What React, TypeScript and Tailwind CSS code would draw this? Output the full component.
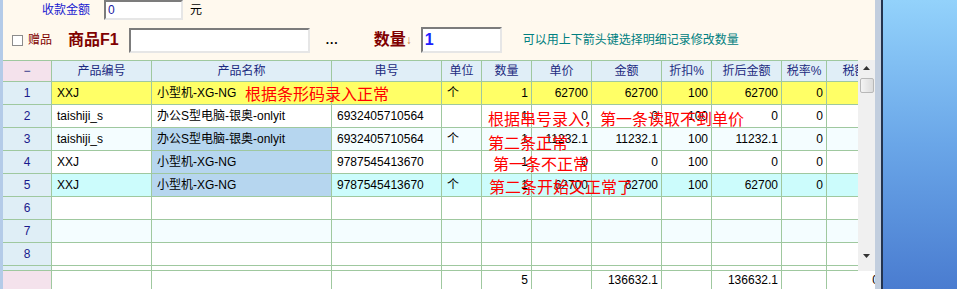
import React from 'react'

type Col = { w: number; title: string; align: 'left' | 'right' | 'center' }

const cols: Col[] = [
  { w: 49, title: '−', align: 'center' },
  { w: 100, title: '产品编号', align: 'left' },
  { w: 180, title: '产品名称', align: 'left' },
  { w: 110, title: '串号', align: 'left' },
  { w: 40, title: '单位', align: 'left' },
  { w: 50, title: '数量', align: 'right' },
  { w: 60, title: '单价', align: 'right' },
  { w: 70, title: '金额', align: 'right' },
  { w: 50, title: '折扣%', align: 'right' },
  { w: 70, title: '折后金额', align: 'right' },
  { w: 45, title: '税率%', align: 'right' },
  { w: 56, title: '税额', align: 'right' },
]

type Row = { bg: string; nameBg?: string; cells: string[] }

const rows: Row[] = [
  { bg: '#ffff66', cells: ['1', 'XXJ', '小型机-XG-NG', '', '个', '1', '62700', '62700', '100', '62700', '0', ''] },
  { bg: '#ffffff', cells: ['2', 'taishiji_s', '办公S型电脑-银奥-onlyit', '6932405710564', '', '1', '0', '0', '100', '0', '0', ''] },
  { bg: '#f4fdff', nameBg: '#b6d6ef', cells: ['3', 'taishiji_s', '办公S型电脑-银奥-onlyit', '6932405710564', '个', '1', '11232.1', '11232.1', '100', '11232.1', '0', ''] },
  { bg: '#ffffff', nameBg: '#b6d6ef', cells: ['4', 'XXJ', '小型机-XG-NG', '9787545413670', '', '1', '0', '0', '100', '0', '0', ''] },
  { bg: '#ccfcfc', nameBg: '#b6d6ef', cells: ['5', 'XXJ', '小型机-XG-NG', '9787545413670', '个', '1', '62700', '62700', '100', '62700', '0', ''] },
  { bg: '#ffffff', cells: ['6', '', '', '', '', '', '', '', '', '', '', ''] },
  { bg: '#f4fdff', cells: ['7', '', '', '', '', '', '', '', '', '', '', ''] },
  { bg: '#ffffff', cells: ['8', '', '', '', '', '', '', '', '', '', '', ''] },
]

const footer = ['', '', '', '', '', '5', '', '136632.1', '', '136632.1', '', '0']

const alignClass = (a: Col['align']) =>
  a === 'right' ? 'justify-end pr-[3px]' : a === 'center' ? 'justify-center' : 'justify-start pl-[5px]'

// red notes written over the grid
const notes = [
  { text: '根据条形码录入正常', x: 245, y: 82 },
  { text: '根据串号录入，第一条读取不到单价', x: 488, y: 107 },
  { text: '第二条正常', x: 488, y: 131 },
  { text: '第一条不正常', x: 493, y: 152 },
  { text: '第二条开始又正常了', x: 489, y: 175 },
]

function Sunken({ w, h, children }: { w: number; h: number; children?: React.ReactNode }) {
  return (
    <div
      className="flex items-center bg-white border-2 border-t-[#7c7c7c] border-l-[#7c7c7c] border-b-[#e6e6e6] border-r-[#e6e6e6] pl-[2px]"
      style={{ width: w, height: h }}
    >
      {children}
    </div>
  )
}

function Arrow({ up }: { up: boolean }) {
  return (
    <svg width="7" height="4" viewBox="0 0 7 4">
      {up ? <polygon points="3.5,0 7,4 0,4" fill="#333" /> : <polygon points="0,0 7,0 3.5,4" fill="#333" />}
    </svg>
  )
}

export default function App() {
  return (
    <div
      className="relative flex w-[957px] h-[289px] overflow-hidden text-[12px] text-black"
      style={{ fontFamily: '"Liberation Sans", "Noto Sans CJK SC", sans-serif' }}
    >
      <div className="w-[3px] shrink-0 bg-[#b4cbe8]" />

      <div className="w-[872px] shrink-0 bg-[#fff9ee] flex flex-col overflow-hidden">
        <div className="flex items-center h-[20px] pl-[39px]">
          <span className="w-[62px] text-[#1a1ad0]">收款金额</span>
          <Sunken w={79} h={20}>
            <span className="text-[#2020a0]">0</span>
          </Sunken>
          <span className="ml-[7px]">元</span>
        </div>

        <div className="flex items-center h-[26px] mt-[7px] pl-[9px]">
          <div className="w-[11px] h-[11px] bg-white border border-[#8c8c8c]" />
          <span className="ml-[5px] text-[#800000]">赠品</span>
          <span className="ml-[16px] text-[16px] font-bold text-[#800000]">商品F1</span>
          <div className="ml-[10px]">
            <Sunken w={181} h={25} />
          </div>
          <span className="ml-[16px] font-bold tracking-[1px]">...</span>
          <span className="ml-[35px] text-[16px] font-bold text-[#800000]">数量</span>
          <span className="text-[12px] text-[#d08040]">↓</span>
          <div className="ml-[9px]">
            <Sunken w={81} h={26}>
              <span className="text-[16px] font-bold text-[#2020ff]">1</span>
            </Sunken>
          </div>
          <span className="ml-[21px] text-[#008080]">可以用上下箭头键选择明细记录修改数量</span>
        </div>

        <div className="mt-[7px] flex">
          <div className="w-[855px] overflow-hidden">
            <div className="w-[883px]">
              <div className="flex h-[22px] border-t border-b border-[#9fc89f] bg-[#e0eef7] text-[#1c2a80]">
                {cols.map((c, i) => (
                  <div
                    key={i}
                    className={`flex items-center justify-center shrink-0 border-r border-[#9fc89f] ${
                      i === 0 ? 'bg-[#f4e2ec]' : ''
                    }`}
                    style={{ width: c.w }}
                  >
                    {c.title}
                  </div>
                ))}
              </div>

              {rows.map((r, ri) => (
                <div key={ri} className="flex h-[23px] border-b border-[#9fc89f]">
                  {cols.map((c, ci) => (
                    <div
                      key={ci}
                      className={`flex items-center shrink-0 whitespace-nowrap overflow-hidden border-r border-[#9fc89f] ${alignClass(
                        c.align
                      )} ${ci === 0 ? 'text-[#1a1a8c]' : ''}`}
                      style={{
                        width: c.w,
                        background: ci === 0 ? '#dfeef6' : ci === 2 && r.nameBg ? r.nameBg : r.bg,
                      }}
                    >
                      {r.cells[ci]}
                    </div>
                  ))}
                </div>
              ))}

              <div className="flex h-[5px] border-b border-[#9fc89f] bg-white">
                {cols.map((c, ci) => (
                  <div
                    key={ci}
                    className={`shrink-0 border-r border-[#9fc89f] ${ci === 0 ? 'bg-[#dfeef6]' : ''}`}
                    style={{ width: c.w }}
                  />
                ))}
              </div>
            </div>
          </div>

          <div className="w-[17px] shrink-0 bg-[#f0f0f0] flex flex-col items-center">
            <div className="h-[16px] flex items-center justify-center">
              <Arrow up />
            </div>
            <div className="mt-[2px] w-[14px] h-[15px] rounded-[2px] border border-[#b8b8b8] bg-gradient-to-r from-[#f4f4f4] to-[#dcdcdc]" />
            <div className="flex-1" />
            <div className="h-[16px] mb-[7px] flex items-center justify-center">
              <Arrow up={false} />
            </div>
          </div>
        </div>

        <div className="w-[883px] flex h-[20px] bg-white">
          {cols.map((c, ci) => (
            <div
              key={ci}
              className={`flex items-center shrink-0 whitespace-nowrap border-r border-[#9fc89f] ${alignClass(c.align)} ${
                ci === 0 ? 'bg-[#f4e2ec]' : ''
              }`}
              style={{ width: c.w }}
            >
              {footer[ci]}
            </div>
          ))}
        </div>
      </div>

      <div className="w-[6px] shrink-0 bg-[#c2cede]" />
      <div className="w-[2px] shrink-0 bg-[#24344f]" />

      <div className="flex-1 bg-gradient-to-b from-[#93d2fb] via-[#6aa6e8] to-[#4a7cd0]" />

      {notes.map((n, i) => (
        <div
          key={i}
          className="absolute whitespace-nowrap text-[16px] leading-[22px] text-[#ff0000]"
          style={{ left: n.x, top: n.y, fontFamily: '"Noto Sans CJK SC", sans-serif' }}
        >
          {n.text}
        </div>
      ))}
    </div>
  )
}
